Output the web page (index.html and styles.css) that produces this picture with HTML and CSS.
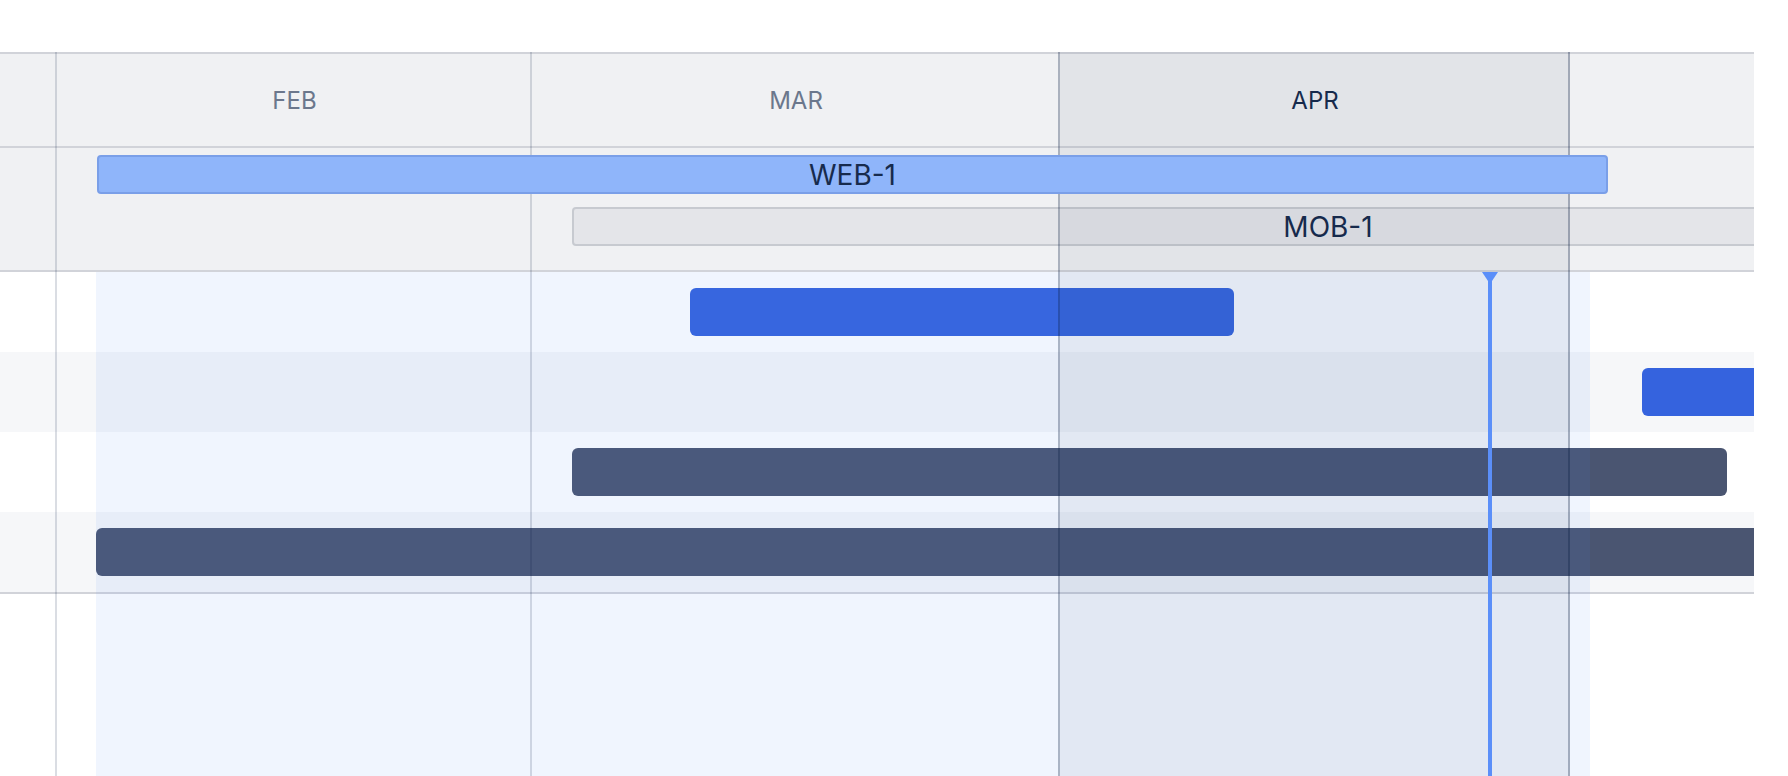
FILE: index.html
```html
<!DOCTYPE html>
<html lang="en">
<head>
    <meta charset="UTF-8">
    <title>Roadmap</title>
    <link rel="stylesheet" href="styles.css">
</head>
<body>
<div class="board">
    <div class="timeline-head">
        <div class="col col-side"></div>
        <div class="col col-feb"><span class="month">FEB</span></div>
        <div class="col col-mar"><span class="month">MAR</span></div>
        <div class="col col-apr"><span class="month month-current">APR</span></div>
        <div class="col col-rest"></div>
    </div>

    <div class="epics">
        <div class="epic-bar epic-web" style="left: 97px; width: 1511px;">WEB-1</div>
        <div class="epic-bar epic-mob" style="left: 572px; width: 1512px;">MOB-1</div>
    </div>

    <div class="rows">
        <div class="row">
            <div class="bar bar-blue" style="left: 690px; width: 544px;"></div>
        </div>
        <div class="row row-alt">
            <div class="bar bar-blue" style="left: 1642px; width: 240px;"></div>
        </div>
        <div class="row">
            <div class="bar bar-dark" style="left: 572px; width: 1155px;"></div>
        </div>
        <div class="row row-alt">
            <div class="bar bar-dark" style="left: 96px; width: 1760px;"></div>
        </div>
    </div>

    <!-- current sprint highlight -->
    <div class="sprint"></div>

    <!-- month grid lines, drawn over the bars -->
    <div class="grid">
        <div class="col col-side"></div>
        <div class="col col-feb"></div>
        <div class="col col-mar"></div>
        <div class="col col-apr"></div>
        <div class="col col-rest"></div>
    </div>

    <div class="today"></div>
</div>
</body>
</html>
```

FILE: styles.css
```css
body {
    margin: 0;
    background: #fff;
    font-family: "Inter", "Noto Sans", sans-serif;
    color: #172b4d;
}

.board {
    position: relative;
    width: 1754px;
    height: 724px;
    margin-top: 52px;
    overflow: hidden;
}

.col-side {
    width: 57px;
}

.col-feb {
    width: 475px;
}

.col-mar {
    width: 528px;
}

.col-apr {
    width: 510px;
}

.col-rest {
    flex: 1;
}

.col {
    box-sizing: border-box;
    flex-shrink: 0;
}

.timeline-head {
    display: flex;
    box-sizing: border-box;
    height: 96px;
    background: #f0f1f3;
    border-top: 2px solid #d1d3d9;
    border-bottom: 2px solid #d1d3d9;
}

.timeline-head .col {
    display: flex;
    align-items: center;
    justify-content: center;
}

.month {
    font-size: 24px;
    color: #6b778c;
}

.month-current {
    color: #172b4d;
}

.epics {
    position: relative;
    box-sizing: border-box;
    height: 124px;
    background: #f0f1f3;
    border-bottom: 2px solid #d1d3d9;
}

.epic-bar {
    position: absolute;
    box-sizing: border-box;
    height: 39px;
    border-radius: 4px;
    display: flex;
    align-items: center;
    justify-content: center;
    font-size: 28px;
    color: #172b4d;
}

.epic-web {
    top: 7px;
    background: #8fb5fa;
    border: 2px solid #7a9fe8;
    z-index: 3;
}

.epic-mob {
    top: 59px;
    background: #e4e5e9;
    border: 2px solid #c7cad0;
}

.rows {
    border-bottom: 2px solid #d1d3d9;
}

.row {
    position: relative;
    height: 80px;
}

.row-alt {
    background: #f6f7f9;
}

.bar {
    position: absolute;
    top: 16px;
    height: 48px;
    border-radius: 6px;
}

.bar-blue {
    background: #3563de;
}

.bar-dark {
    background: #4a5571;
}

.sprint {
    position: absolute;
    top: 220px;
    bottom: 0;
    left: 96px;
    width: 1494px;
    background: rgba(76, 134, 245, 0.085);
    z-index: 1;
}

.grid {
    position: absolute;
    top: 0;
    bottom: 0;
    left: 0;
    right: 0;
    display: flex;
    pointer-events: none;
    z-index: 2;
}

.grid .col {
    border-right: 2px solid rgba(9, 30, 66, 0.15);
}

.grid .col-mar {
    border-right-color: rgba(9, 30, 66, 0.3);
}

.grid .col-apr {
    background: rgba(9, 30, 66, 0.06);
    border-right-color: rgba(9, 30, 66, 0.3);
}

.grid .col-rest {
    border-right: none;
}

.today {
    position: absolute;
    top: 220px;
    bottom: 0;
    left: 1488px;
    width: 4px;
    background: #5b8ff9;
    z-index: 4;
}

.today::before {
    content: "";
    position: absolute;
    top: 0;
    left: -6px;
    border-left: 8px solid transparent;
    border-right: 8px solid transparent;
    border-top: 12px solid #5b8ff9;
}
```
